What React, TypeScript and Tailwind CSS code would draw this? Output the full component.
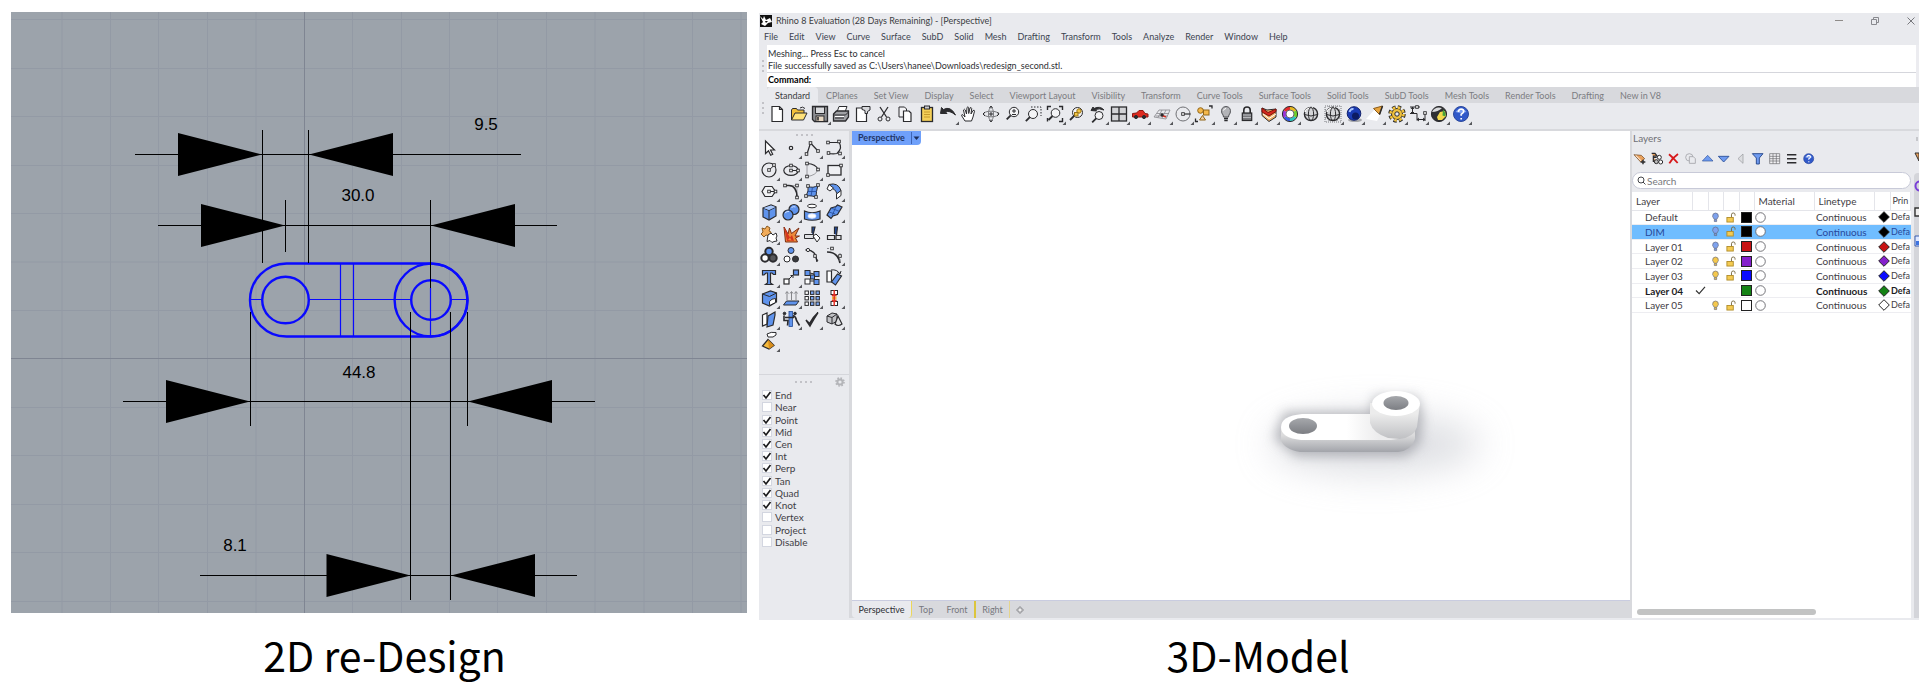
import React from "react";

type Tool = { name: string; art: React.ReactNode; more?: boolean };

const menus = ["File", "Edit", "View", "Curve", "Surface", "SubD", "Solid", "Mesh", "Drafting", "Transform", "Tools", "Analyze", "Render", "Window", "Help"];

const tabs = ["Standard", "CPlanes", "Set View", "Display", "Select", "Viewport Layout", "Visibility", "Transform", "Curve Tools", "Surface Tools", "Solid Tools", "SubD Tools", "Mesh Tools", "Render Tools", "Drafting", "New in V8"];

const snaps: [string, boolean][] = [
    ["End", true],
    ["Near", false],
    ["Point", true],
    ["Mid", true],
    ["Cen", true],
    ["Int", true],
    ["Perp", true],
    ["Tan", true],
    ["Quad", true],
    ["Knot", true],
    ["Vertex", false],
    ["Project", false],
    ["Disable", false],
];

const layers = [
    { name: "Default", color: "#000000", bulb: "#7ea2ee" },
    { name: "DIM", color: "#000000", bulb: "#7ea2ee", selected: true },
    { name: "Layer 01", color: "#c81414", bulb: "#7ea2ee" },
    { name: "Layer 02", color: "#8420cc", bulb: "#f5c84c" },
    { name: "Layer 03", color: "#0a0aff", bulb: "#f5c84c" },
    { name: "Layer 04", color: "#148214", bulb: "", current: true },
    { name: "Layer 05", color: "#ffffff", bulb: "#f5c84c" },
];

const ink = "#2b2b2e";
const blue = "#5f93ec";

// Small square handle used on most of the curve icons
const Knob = ({ x, y, fill = "#fff" }: { x: number; y: number; fill?: string }) => (
    <rect x={x - 1.3} y={y - 1.3} width="2.6" height="2.6" fill={fill} stroke={ink} strokeWidth="0.9" />
);

const Lens = ({ x, y, r }: { x: number; y: number; r: number }) => (
    <>
        <circle cx={x} cy={y} r={r} fill="#f4f4f6" />
        <path d={`M${x - r * 0.7} ${y + r * 0.7}L${x - r * 0.7 - 4} ${y + r * 0.7 + 4}`} strokeWidth="1.8" />
    </>
);

const Globe = () => (
    <>
        <circle cx="10" cy="10" r="6.6" fill="#d4d5d8" strokeWidth="1.4" />
        <path d="M4 8a7 6 0 0 1 8-4" stroke="#fff" strokeWidth="1.5" />
        <ellipse cx="10" cy="10" rx="2.6" ry="6.5" />
        <path d="M3.500 10.500q6.500 3 13 0" />
    </>
);

const Help = () => (
    <>
        <circle cx="10" cy="10" r="7.5" fill="#3159c9" stroke="#2a479c" />
        <path d="M4.500 8a6 5 0 0 1 11 0q-5 2-11 0" fill="#7d9ff0" stroke="none" />
        <path d="M7.400 8q.2-3 2.800-3 2.600.2 2.500 2.500-.2 1.400-2.500 2.700v1.600M10.200 14v1.400" stroke="#fff" strokeWidth="1.7" />
    </>
);

const toolbar: Tool[] = [
    { name: "New", art: <path d="M5 2.500h7.500l3 3v12H5zM12.500 2.500v3h3" fill="#fff" strokeWidth="1.200" /> },
    { name: "Open", art: <><path d="M2.500 16V6l1-1.500h4l1 1.500h6.500v3" fill="#f2bf3a" /><path d="M2.500 16l3.500-7h12l-3.500 7z" fill="#ffe27a" /><path d="M11 4q2.500-2 5 .5" /></> },
    { name: "Save", more: true, art: <><path d="M2.500 2.500h15v15h-13l-2-2z" fill="#8d8e92" strokeWidth="1.300" /><rect x="5.500" y="3" width="9" height="6.500" fill="#d9dadd" /><rect x="6" y="12" width="8" height="5.500" fill="#e9d9c4" /><path d="M8 13v3.500" strokeWidth="1.600" /></> },
    { name: "Print", art: <><path d="M6 8l2-5.500h8L14 8" fill="#fff" /><path d="M2.500 10l3-3h12v6l-3 4h-12z" fill="#a0a1a5" strokeWidth="1.300" /><path d="M3 11h11.500l3-3M4 14h9" /><path d="M4 12.500h9" stroke="#fff" /></> },
    { name: "Properties", art: <><path d="M3.500 4h10v13.500h-10z" fill="#fff" strokeWidth="1.200" /><path d="M9 2.500h8v3.500l-2.500 1.500v2H12V6.500L9 5.500z" fill="#d7d8db" /></> },
    { name: "Cut", art: <><path d="M6 3l6.500 10M14 3L7.500 13" strokeWidth="1.300" /><circle cx="6" cy="15" r="2" /><circle cx="14" cy="15" r="2" /></> },
    { name: "Copy", art: <><path d="M4 3h5.500l2 2v8H4z" fill="#f4f4f6" /><path d="M8.500 7H14l2 2v8.500H8.500z" fill="#fff" strokeWidth="1.200" /></> },
    { name: "Paste", art: <><rect x="4.500" y="3.500" width="11" height="14" fill="#f4cf58" strokeWidth="1.300" /><rect x="7.500" y="2" width="5" height="3" fill="#c9cacd" /><path d="M7 8h6M7 10.500h6M7 13h6" stroke="#c69a2c" /></> },
    { name: "Undo", more: true, art: <path d="M2.500 9.500l1-6 2 2q7-4 12 5.500-6-5-10-3l1.500 1.500z" fill={ink} /> },
    { name: "Pan", art: <path d="M6 17l-3.500-5.500q0-2 2 0L6 13 4.500 6q1-1.500 1.800 0l1.200 4L8 3.500q1-1.500 1.700 0v6l1.300-5.500q1.200-1.200 1.700.5l-.7 5.500 2-3.500q1.500-.8 1.500.7L14 13l-1.500 4z" fill="#fff" /> },
    { name: "Rotate", art: <><ellipse cx="10" cy="10" rx="7.500" ry="2.800" stroke="#77787c" /><ellipse cx="10" cy="10" rx="2.500" ry="6.500" stroke="#77787c" /><path d="M8.500 4L10 2l1.500 2M8.500 16l1.500 2 1.500-2M8 10h4M10 8v4M4 8L2 10l2 2M16.500 8l1.500 2-2 2" /></> },
    { name: "Zoom", art: <><Lens x={12} y={8} r={4.700} /><path d="M10 7h4M12 5v4M10 10.500h4" /></> },
    { name: "Zoom window", art: <><path d="M7 3h10v9" strokeDasharray="1.500 1.500" /><Lens x={9} y={10} r={4.500} /></> },
    { name: "Zoom extents", more: true, art: <><Lens x={10.500} y={9} r={4.300} /><path d="M2.500 6V2.500H6M14 2.500h3.500V6M17.500 14v3.500H14M2.500 14v3.500" strokeWidth="1.400" /></> },
    { name: "Zoom selected", art: <><Lens x={11.500} y={8.500} r={5} /><circle cx="13" cy="7" r="2.200" fill="#f4c744" stroke="#967218" /><rect x="8.500" y="8.500" width="3.500" height="3.500" fill="#f4c744" stroke="#967218" /></> },
    { name: "Undo view", more: true, art: <><Lens x={11} y={11.500} r={4} /><path d="M3 6.500L5 3l1 1.500q6-3 10 1.500-5-2-8.500-.5l1 1.500z" fill={ink} /></> },
    { name: "Viewports", more: true, art: <><rect x="2.500" y="3" width="15" height="14" fill="#d2d3d6" strokeWidth="1.300" /><path d="M10 3v14M2.500 10h15" strokeWidth="1.300" /></> },
    { name: "Set view", more: true, art: <><path d="M2.500 9.500l4-.5 2.500-2.500h4l2 3 3 .5v3h-15.500z" fill="#de2a1f" stroke="#8e1710" /><circle cx="6" cy="13" r="1.600" fill={ink} /><circle cx="14" cy="13" r="1.600" fill={ink} /></> },
    { name: "CPlane", more: true, art: <><path d="M2 13l5-7h11l-4 9zM5 9.500h12M3.500 12h12M10 6l-4 7.500M14 6l-4 8" stroke="#86878b" strokeWidth=".8" /><path d="M9 11l5 2" stroke="#d52b1e" strokeWidth="1.500" /><circle cx="10" cy="11" r="1.200" fill={ink} /></> },
    { name: "Object snap", more: true, art: <><circle cx="10" cy="10" r="7" stroke="#707175" /><path d="M10 10h7.500" strokeWidth="1.200" /><Knob x={10} y={10} /></> },
    { name: "Select", more: true, art: <><circle cx="6.500" cy="6.500" r="2.800" fill="#f4b84b" stroke="#926618" /><rect x="9.500" y="6" width="5.500" height="5" fill="#f4b84b" stroke="#926618" /><path d="M8.500 11.500l3 4.500h-6z" fill="#f4d0a0" stroke="#926618" /><path d="M15 2h3v2.500M1.500 14.500v3h2.500" strokeWidth="1.300" /></> },
    { name: "Hide", more: true, art: <><path d="M7.500 13q0-2-1.700-4Q4.500 3 10 2.500q5.500.5 4.200 6.500-1.700 2-1.700 4z" fill="#b3b4b8" stroke="#505155" /><path d="M8 14.500h4M8.300 16.500h3.400" strokeWidth="1.500" /><path d="M7.500 6.500q.5-2 2.500-2" stroke="#fff" /></> },
    { name: "Lock", more: true, art: <><path d="M6.800 9V6q0-3 3.200-3t3.200 3v3" strokeWidth="1.600" /><rect x="5.300" y="9" width="9.400" height="7.500" fill="#77787c" strokeWidth="1.200" /><path d="M6 11h8M6 13.500h8" stroke="#b8b9bd" /></> },
    { name: "Layers", more: true, art: <><path d="M3 4l5 2 9-1v8l-7 4.500-7-6z" fill="#f0b46a" /><path d="M3 4l6 4.500L17 5v2.500L10 12 3 8z" fill="#d5281c" stroke="#7a120b" /><path d="M4 10l6 4.500 7-4.500" stroke="#fff" /></> },
    { name: "Color", more: true, art: <><g strokeWidth="3.200"><path d="M10 4.200A5.800 5.800 0 0 1 15 7" stroke="#e6b820" /><path d="M15 7A5.800 5.800 0 0 1 15 13" stroke="#6ed22b" /><path d="M15 13A5.800 5.800 0 0 1 10 15.800" stroke="#2cc7c0" /><path d="M10 15.800A5.800 5.800 0 0 1 5 13" stroke="#2f5be8" /><path d="M5 13A5.800 5.800 0 0 1 5 7" stroke="#9a35dc" /><path d="M5 7A5.800 5.800 0 0 1 10 4.200" stroke="#e62b2b" /></g><circle cx="10" cy="10" r="7.600" /><circle cx="10" cy="10" r="4" fill="#fff" strokeWidth=".7" /></> },
    { name: "Render", art: <Globe /> },
    { name: "Render preview", more: true, art: <><path d="M2 2h16v16H2zM6 2v16M14 2v16M2 6h16M2 14h16M10 2v16" stroke="#77787c" strokeDasharray="1 1" /><Globe /></> },
    { name: "Shaded", more: true, art: <><ellipse cx="11" cy="16" rx="7" ry="2" fill="#a5a6aa" stroke="none" /><circle cx="10" cy="9.500" r="6.800" fill="#1a3bb4" stroke="#10206a" /><circle cx="11.500" cy="12" r="3.500" fill="#0c1b62" stroke="none" /><path d="M5.500 8q1-3.500 4-3" stroke="#a9c4ff" strokeWidth="2" /></> },
    { name: "Spotlight", more: true, art: <><path d="M1 15L10 5l5 6-3 6z" fill="#fff" stroke="none" /><path d="M8.500 4.500l9-2.500-3 8.500z" fill="#e8a43c" stroke="#8a5a18" /><path d="M17.500 2l-3 8.500" strokeWidth="1.500" /></> },
    { name: "Options", more: true, art: <><circle cx="10" cy="10" r="6.500" stroke={ink} strokeWidth="4.500" strokeDasharray="3 2.100" /><circle cx="10" cy="10" r="5.500" fill="#f0c13c" /><circle cx="10" cy="10" r="6.500" stroke="#f0c13c" strokeWidth="2.500" strokeDasharray="2.500 2.600" /><circle cx="10" cy="10" r="2.200" fill="#e9eaee" /></> },
    { name: "Dimension", more: true, art: <><path d="M2 3h10M2 9.500h7M4.500 3v6.500M3 5l1.500-2L6 5M3 8l1.500 1.500L6 8M9 9.500v7M17 9v8M9 15.500h8M11 14l-2 1.500 2 1.500M15 14l2 1.500-2 1.500" /><Knob x={9} y={3} /><Knob x={17} y={9} /></> },
    { name: "Grasshopper", more: true, art: <><circle cx="10" cy="10" r="7.600" fill="#2f3033" /><path d="M3 8q3-6 10-4-4 4-10 4z" fill="#dadbdd" stroke="none" /><path d="M8 13l3-5 5-1 1 5-4 4H9z" fill="#f3d94c" stroke="none" /><path d="M14 5.500q3 3 2.500 7l-3-1z" fill="#45a33b" stroke="none" /></> },
    { name: "Help", more: true, art: <Help /> },
];

const palette: Tool[] = [
    { name: "Pointer", art: <path d="M6.500 3v12.500l3-2.800 2.200 4.500 2-1-2.200-4.200h4z" fill="#fff" strokeWidth="1.200" /> },
    { name: "Point", more: true, art: <circle cx="10" cy="10" r="1.700" fill="#fff" strokeWidth="1.200" /> },
    { name: "Polyline", more: true, art: <><path d="M5 16L8.500 5 16 13" strokeWidth="1.200" /><Knob x={4.500} y={16} /><Knob x={8.500} y={5} /><Knob x={16} y={13} /></> },
    { name: "Curve", more: true, art: <><path d="M4 4.500h11Q19 10 13 15.500q-5 1-9-.5" strokeWidth="1.200" /><Knob x={4} y={4.500} /><Knob x={15} y={3.500} /><Knob x={4.500} y={15} /><Knob x={16} y={15.500} /></> },
    { name: "Circle", more: true, art: <><circle cx="10" cy="10" r="7" strokeWidth="1.200" /><path d="M10 10l5-4.500" /><Knob x={10} y={10} /><Knob x={15} y={5} /></> },
    { name: "Ellipse", more: true, art: <><ellipse cx="10" cy="10.500" rx="7.200" ry="4.800" strokeWidth="1.200" /><path d="M10 10.500h7" /><Knob x={10} y={10.500} /><Knob x={10} y={5.500} /><Knob x={17} y={10.500} /></> },
    { name: "Arc", more: true, art: <><path d="M5 3.500v13M5 16.500q9-1 11-7" stroke="#88898d" strokeWidth=".8" /><path d="M5 3.500q9 .5 11 6" strokeWidth="1.200" /><Knob x={5} y={3.500} /><Knob x={5} y={16.500} /><Knob x={16} y={9.500} /></> },
    { name: "Rectangle", more: true, art: <><rect x="4" y="5.500" width="13" height="9.500" strokeWidth="1.300" fill="#eff0f3" /><Knob x={4} y={15} /><Knob x={17} y={5.500} /></> },
    { name: "Polygon", more: true, art: <><path d="M3 10.500L6 5.500h7l3.500 5-3.500 5H6z" fill="#f2f3f5" strokeWidth="1.200" /><path d="M10 10.500h6" /><Knob x={10} y={10.500} /><Knob x={16.500} y={10.500} /></> },
    { name: "Fillet", more: true, art: <><path d="M4 4.500h12v12" stroke="#aaabaf" /><path d="M4 4.500h4q8 .5 8 12" strokeWidth="1.500" /><Knob x={4} y={4.500} /><Knob x={16} y={4.500} /><Knob x={16} y={16.500} /></> },
    { name: "Surface from points", more: true, art: <><path d="M6 5q5 3 10-1-2 7-2 12-5-2-10-1 3-5 2-10z" fill={blue} /><path d="M10.500 6L9 15.500M5.500 10.500h9.500" stroke="#234b9c" strokeWidth=".8" /><Knob x={6} y={5} /><Knob x={16} y={4} /><Knob x={14} y={16} /><Knob x={4} y={15} /></> },
    { name: "Sweep", more: true, art: <><path d="M5 3.500q9-2.500 12 6l-4 3.500Q11 6.500 5 7z" fill={blue} /><path d="M5 3.500L3 8l3 2 3.500-3zM17 9.500v5L12.500 18v-5z" fill="#fff" /></> },
    { name: "Box", more: true, art: <><path d="M4 6l8-3 5 2v9l-7 4-6-3z" fill={blue} strokeWidth="1.200" /><path d="M4 6l6 2.500v9M10 8.500L17 5" /><path d="M4.500 6L12 3.500l4.500 1.500-6.500 3z" fill="#a9c7fa" stroke="none" /></> },
    { name: "Boolean union", more: true, art: <><circle cx="13" cy="7.500" r="5" fill={blue} strokeWidth="1.200" /><circle cx="7" cy="13" r="5" fill={blue} strokeWidth="1.200" /><path d="M4 11q2-2 4-1.500M10.500 5.500q2-1.500 4-.5" stroke="#cfe0ff" /></> },
    { name: "Extract surface", more: true, art: <><ellipse cx="10" cy="4" rx="4.500" ry="1.800" fill="#fff" /><path d="M2.500 9q7.500 3.500 15.500 0v8q-8 2.500-15.500 0z" fill={blue} strokeWidth="1.200" /><ellipse cx="10" cy="14" rx="4" ry="2.200" fill="#fff" stroke="#dfe9ff" /></> },
    { name: "Loft", more: true, art: <><path d="M3 13l4-7 5-1.500 1.500-1.500L18 5l-4.500 7.500L9 14l-2 2.500z" fill={blue} strokeWidth="1.200" /><path d="M7 6l5 2 3.500 1.500M12 4.500L8 14M5 10l6 2" stroke="#244a94" strokeWidth=".8" /></> },
    { name: "Explode", more: true, art: <><path d="M3 4l3 1 2-3 3 2-1 3 2 1-1 4-4-1-2 2-3-3 2-2z" fill="#f1ab59" stroke="#8a5a20" /><path d="M9 11l3-2 2 2 3-2 1 3-1 2 1 3-3 .5-2 1-2-2-3 1z" fill="#fff" /></> },
    { name: "Split burst", art: <><path d="M3 3l4 7 1.500-6 2 5.500L18 4l-4 8h4.500l-4 2 2 4H4.500z" fill="#ee8a3a" stroke="#7c2c12" /><path d="M3 3l3 14h5zM7 16l4-5 2 6z" fill="#d5361d" stroke="none" /></> },
    { name: "Trim", art: <><path d="M10 9V3h3l-2 8" fill="#234b9c" strokeWidth="1.200" /><path d="M2.500 10.500h9v4h-9z" fill="#dfe0e3" /><path d="M11 12l3-2 4 4-3 4z" fill="#fff" /></> },
    { name: "Split", art: <><path d="M10.500 10V3h3l-1 8" fill="#234b9c" strokeWidth="1.200" /><path d="M3.500 11.500h7v4h-7zM12 11.500h5v4h-5z" fill="#e6e7ea" strokeWidth="1.200" /></> },
    { name: "Group", more: true, art: <><circle cx="10" cy="6.500" r="3.700" fill={blue} strokeWidth="2" /><circle cx="6" cy="13" r="3.700" fill="#fff" strokeWidth="2" /><circle cx="14" cy="13" r="3.700" fill="#55565a" strokeWidth="2" /></> },
    { name: "Ungroup", art: <><circle cx="10" cy="5.500" r="3" fill={blue} /><circle cx="6" cy="14" r="3" fill="#fff" /><circle cx="14.500" cy="14" r="3" fill="#38393c" /></> },
    { name: "Edit points", art: <><path d="M3.500 5Q14 4 15 17" strokeWidth="1.400" /><circle cx="6" cy="5" r="1.600" fill="#fff" /><Knob x={13} y={11} /><path d="M14 13l2 3" /></> },
    { name: "Control points", more: true, art: <><path d="M3 7q11 0 13 11" strokeWidth="1.700" /><path d="M3 3.500h6M16 8v9" stroke="#88898d" strokeDasharray="2 1" /><Knob x={8} y={3.500} /><Knob x={16} y={11} /></> },
    { name: "Text", more: true, art: <path d="M3.500 3.500h13v4h-2L13 6h-1.500v10l2 1.500h-7l2-1.500V6H7L5 8H3.500z" fill={blue} strokeWidth="1.200" /> },
    { name: "Move", more: true, art: <><rect x="3" y="12" width="5" height="5" fill="#fff" strokeWidth="1.200" /><rect x="12.500" y="3" width="5" height="5" fill={blue} strokeWidth="1.200" /><path d="M8 12l4-4M9.500 8.500H12v2.500" /></> },
    { name: "Copy objects", art: <><path d="M8 6l4 1M8 14h4" /><rect x="3" y="3.500" width="5" height="5" fill={blue} /><rect x="12" y="4.500" width="5" height="5" fill={blue} /><rect x="8.500" y="8" width="4" height="4" fill={blue} /><rect x="3" y="12" width="5" height="5" fill="#fff" /><rect x="12" y="12.500" width="5" height="5" fill={blue} /></> },
    { name: "Rotate objects", art: <><path d="M3 4h4.500v11H3z" fill="#fff" strokeWidth="1.200" /><path d="M13.500 7l4 2-6 9-4-3z" fill={blue} strokeWidth="1.200" /><path d="M7 3q6-1 9 4M13.500 5l2.500 2 1-3" /></> },
    { name: "Boolean difference", more: true, art: <><path d="M3.500 6l8-3 6 2v9l-7 4-7-3z" fill={blue} strokeWidth="1.200" /><path d="M3.500 6l7 2.500L17.500 5" /><path d="M10.500 17.500v-4q2-3 6-3v4z" fill="#fff" /></> },
    { name: "Project to plane", more: true, art: <><path d="M2.500 17l3-4H18l-3 4z" fill={blue} /><path d="M6 12V4M10.500 12V4M15 12V4M4.500 5.500L6 3.500l1.500 2M9 5.500l1.500-2 1.500 2M13.500 5.500l1.500-2 1.500 2" stroke="#85868a" /></> },
    { name: "Array", more: true, art: <g>{[3, 8.500, 14].map((y) => [3, 8.500, 14].map((x) => <rect key={`${x}-${y}`} x={x} y={y} width="3.400" height="3.400" fill={x === 3 ? "#fff" : "#7ba6f1"} />))}</g> },
    { name: "Align", more: true, art: <><rect x="7" y="2.500" width="6.500" height="4" fill="#fff" /><rect x="8" y="8.500" width="4.500" height="3" fill="#f6b13c" stroke="none" /><rect x="7" y="13.500" width="6.500" height="4" fill="#fff" /><path d="M10.200 2v16M8 8l2.200-2 2.200 2M8 12l2.200 2 2.200-2" stroke="#de2a1f" strokeWidth="1.400" /></> },
    { name: "Mirror", more: true, art: <><path d="M3.500 6l4.500-2v11l-4.500 2z" fill="#fff" strokeWidth="1.200" /><path d="M9 7l7-4v3l-2 10-6 2z" fill={blue} strokeWidth="1.200" /></> },
    { name: "History", more: true, art: <><rect x="8" y="2.500" width="3.500" height="15" fill={blue} stroke="#244a94" strokeWidth=".8" /><path d="M3 6.500v5h4l-.5 5M4 8.500h9M12 6.500q3 1 3.500 5l3 5" strokeWidth="1.600" /><circle cx="3.500" cy="4.500" r="1.300" fill={ink} /><circle cx="14" cy="4.500" r="1.300" fill={ink} /></> },
    { name: "Check", more: true, art: <path d="M4 11l3.500 3.500q3-6 8.500-11-4 6-8 13.500z" fill={ink} strokeWidth="1.500" /> },
    { name: "Mesh", more: true, art: <><path d="M3 7l5-3 5 1v7l-5 3-5-2z" fill="#bfc0c4" /><path d="M3 7l5 1.500L13 5M8 8.500V15" /><path d="M14 7l4 8q-4 3-7 0z" fill="#e2e3e6" strokeWidth="1.200" /></> },
    { name: "Drag pyramid", more: true, art: <><path d="M8 3q4-2.500 9-1.500v2.500l-3 2H9z" fill="#fff" /><path d="M3.500 15L9 8.500l6 6-5 3.500z" fill="#f4b93d" strokeWidth="1.200" /><path d="M9 8.500l1 9.500 5-3.500z" fill="#d98e1c" stroke="none" /></> },
];

const layerTools: Tool[] = [
    { name: "New layer", art: <><path d="M1.500 4l11 1 5 5-6 5z" fill="#e8a05c" stroke="#6b431d" /><path d="M4 5l8 8" stroke="#fff" strokeWidth="1.500" /><path d="M15 11.500v7M11.500 15h7" strokeWidth="2.200" /></> },
    { name: "New sublayer", art: <><path d="M2.500 2h5l3 4H5v8h4M5 8h5" fill="#e8a05c" strokeWidth="1.800" /><circle cx="14" cy="8" r="3" fill="#fff" strokeWidth="1.500" /><circle cx="9.500" cy="14.500" r="3" fill="#bbb" strokeWidth="1.500" /><circle cx="16" cy="15" r="3" fill="#fff" strokeWidth="1.500" /></> },
    { name: "Delete", art: <path d="M3 3.500q6 5 13 13M16.500 3Q8 9 3.500 17" stroke="#d6181a" strokeWidth="2.800" /> },
    { name: "Duplicate", art: <g stroke="#a5a6aa" strokeWidth="1.300"><circle cx="8" cy="8" r="5.500" /><path d="M8 7h6l3 3v7H8z" fill="#e9eaee" /></g> },
    { name: "Move up", art: <path d="M2 13.500L10 5l8 8.500z" fill="#6f9bf0" stroke="#32559c" /> },
    { name: "Move down", art: <path d="M2 6.500l8 8.500 8-8.500z" fill="#6f9bf0" stroke="#32559c" strokeWidth="1.400" /> },
    { name: "Move out", art: <path d="M13.500 3v14L6 10z" fill="#dcdde0" stroke="#96979b" /> },
    { name: "Filter", art: <path d="M2 2.500h16l-5.500 6.500v9H8V9z" fill="#6f9bf0" stroke="#26478c" strokeWidth="1.400" /> },
    { name: "Columns", art: <path d="M2.500 2.500h15v15h-15zM2.500 6.500h15M2.500 10h15M2.500 13.500h15M7.500 2.500v15M12.500 2.500v15" stroke="#66676b" fill="#f2f2f4" /> },
    { name: "Menu", art: <path d="M3 4h14M3 10h14M3 16h14" strokeWidth="2.200" /> },
    { name: "Layer help", art: <Help /> },
];

const ToolButton = ({ tool, size }: { tool: Tool; size: string }) => (
    <button aria-label={tool.name} className="flex items-center justify-center">
        <svg viewBox="0 0 21 21" className={size} fill="none" stroke={ink} strokeWidth="1">
            {tool.art}
            {tool.more && <path d="M21 17.500V21h-3.500z" fill="#55565a" stroke="none" />}
        </svg>
    </button>
);

const Grip = ({ vertical = false }: { vertical?: boolean }) => (
    <span className={vertical ? "flex flex-col gap-[3px]" : "flex gap-[3px]"}>
        {[0, 1, 2, 3].slice(vertical ? 1 : 0).map((n) => (
            <span key={n} className="size-[2px] rounded-full bg-[#b4b5ba]" />
        ))}
    </span>
);

// One dimension line: arrow heads point inwards at `from` and `to`
const Dimension = ({ y, start, end, from, to }: { y: number; start: number; end: number; from: number; to: number }) => (
    <g>
        <path d={`M${start} ${y}H${end}`} stroke="#000" strokeWidth="1" />
        <path d={`M${from} ${y}l-84 -21.500v43zM${to} ${y}l84 -21.500v43z`} />
    </g>
);

const Drawing = () => (
    <svg viewBox="11 12 736 601" className="block w-full bg-[#9ca3ab]" fontFamily="'Liberation Sans', Arial, sans-serif">
        <g stroke="#939aa5" strokeWidth="1">
            {[62, 110.500, 158.500, 207.500, 256, 352.500, 401.500, 449.500, 497.500, 546.500, 595, 644, 692.500, 741].map((x) => (
                <path key={x} d={`M${x} 12V613`} />
            ))}
            {[19.500, 68.500, 116.500, 165.500, 213.500, 262, 310.500, 407.500, 455.500, 504.500, 552.500, 601.500].map((y) => (
                <path key={y} d={`M11 ${y}H747`} />
            ))}
            <path d="M304.500 12V613M11 358.500H747" stroke="#7f8592" />
        </g>

        <Dimension y={154.500} start={135} end={521} from={262} to={309} />
        <Dimension y={225.500} start={158} end={557} from={285} to={431} />
        <Dimension y={401.500} start={123} end={595} from={250} to={468} />
        <Dimension y={575.500} start={200} end={577} from={410.500} to={451} />

        <g fill="none" stroke="#0a0aff" strokeWidth="2.400">
            <path d="M286.500 263.500H431a36.400 36.400 0 0 1 0 73H286.500a36.400 36.400 0 0 1 0-73z" />
            <circle cx="431" cy="300" r="36.400" />
            <circle cx="285.500" cy="300" r="23.300" />
            <circle cx="431" cy="300" r="19.800" />
            <path d="M250 299.500h12M309 299.500h102M451 299.500h17M340.500 264v72M353.500 264v72M430.500 288v48" strokeWidth="1.200" />
        </g>

        <path
            d="M262.500 130V263M308.500 130V263M285.500 200V252M430.500 200V288M250.500 312V426M467.500 312V426M410.500 312V600M450.500 312V600"
            stroke="#000"
            strokeWidth="1"
        />

        <g fontSize="17" textAnchor="middle">
            <text x="486" y="130">9.5</text>
            <text x="358" y="201">30.0</text>
            <text x="359" y="378">44.8</text>
            <text x="235" y="551">8.1</text>
        </g>
    </svg>
);

const Model = () => (
    <svg viewBox="0 0 300 160" className="h-[160px] w-[300px] shrink-0 overflow-visible">
        <defs>
            <linearGradient id="side" x1="0" y1="0" x2="0" y2="1">
                <stop offset="0.400" stopColor="#dcdcdd" />
                <stop offset="1" stopColor="#a2a4aa" />
            </linearGradient>
            <linearGradient id="boss" x1="0" y1="0" x2="0" y2="1">
                <stop offset="0.300" stopColor="#ececec" />
                <stop offset="1" stopColor="#bfc0c3" />
            </linearGradient>
            <linearGradient id="top" x1="0" y1="0" x2="1" y2="0">
                <stop offset="0.500" stopColor="#fff" />
                <stop offset="0.750" stopColor="#ececed" />
            </linearGradient>
            <linearGradient id="hole" x1="0" y1="0" x2="0" y2="1">
                <stop offset="0" stopColor="#a6a8ac" />
                <stop offset="1" stopColor="#7c7e83" />
            </linearGradient>
            <filter id="wide" x="-50%" y="-100%" width="200%" height="300%">
                <feGaussianBlur stdDeviation="18" />
            </filter>
            <filter id="near" x="-50%" y="-50%" width="200%" height="200%">
                <feGaussianBlur stdDeviation="6" />
            </filter>
        </defs>
        <ellipse cx="145" cy="84" rx="105" ry="30" fill="#c9cbd2" opacity="0.6" filter="url(#wide)" />
        <path d="M54 52h85l6-16h42l6 20-3 28-14 12H66L44 78z" fill="#8e9097" opacity="0.6" filter="url(#near)" />
        <path d="M51 67v13q3 9 19 12h98q13-1 17-13V64z" fill="url(#side)" />
        <path d="M72 54h95q15 2 15 13t-21 13H71Q51 78 51 67t21-13z" fill="url(#top)" />
        <path d="M140 43v20q3 10 18 15l12 1q14-2 17-12l3-24z" fill="url(#boss)" />
        <ellipse cx="166" cy="43.500" rx="24" ry="12.500" fill="#fff" />
        <ellipse cx="166" cy="43" rx="12.500" ry="7" fill="url(#hole)" />
        <ellipse cx="73" cy="66" rx="14" ry="8" fill="url(#hole)" />
    </svg>
);

const TitleBar = () => (
    <div className="flex h-4 items-center text-[#3c3d42]">
        <svg viewBox="0 0 12 12" className="ml-px size-3">
            <rect width="12" height="12" fill="#111" />
            <path d="M0 1l3 3 1-3 2 4 4-2 2 4-4 1-3 3-4-2 2-2z" fill="#fff" />
            <path d="M5 6l3 0-2 2z" fill="#111" />
        </svg>
        <span className="ml-1 text-[9px]">Rhino 8 Evaluation (28 Days Remaining) - [Perspective]</span>
        <div className="ml-auto mr-1 flex items-center gap-7">
            <button aria-label="Minimize">
                <svg viewBox="0 0 8 8" className="size-2" stroke="#8e8b88" fill="none"><path d="M0 3.500h8" /></svg>
            </button>
            <button aria-label="Restore">
                <svg viewBox="0 0 8 8" className="size-2" stroke="#88898e" fill="none"><path d="M.5 2.500h5v5h-5zM2.500 2.500v-2h5v5h-2" /></svg>
            </button>
            <button aria-label="Close">
                <svg viewBox="0 0 8 8" className="size-2" stroke="#77787d" fill="none"><path d="M.5.5l7 7M7.500.5l-7 7" /></svg>
            </button>
        </div>
    </div>
);

const CommandArea = () => (
    <div className="flex h-[42px]">
        <div className="flex w-2 items-center justify-center"><Grip vertical /></div>
        <div className="flex-1 bg-white text-[9px] text-[#2e2f33]">
            <div className="flex h-7 flex-col justify-end border-b border-[#d5d6dc] pl-px leading-[12px]">
                <p>Meshing... Press Esc to cancel</p>
                <p>File successfully saved as C:\Users\hanee\Downloads\redesign_second.stl.</p>
            </div>
            <label className="flex h-[14px] items-center pl-px font-bold text-black">
                Command:
                <input className="ml-1 h-3 flex-1 outline-none" />
            </label>
        </div>
        <div className="w-[3px] bg-[#ececf0]" />
    </div>
);

const Toolbar = () => (
    <div className="flex h-[42px]">
        <div className="flex w-2 items-center justify-center"><Grip vertical /></div>
        <div className="flex-1">
            <div className="flex h-4 items-stretch bg-[#d8d9dd] text-[9px] text-[#7b7c81]">
                {tabs.map((tab, i) => (
                    <button
                        key={tab}
                        className={i === 0 ? "rounded-t bg-[#e9eaee] px-2 pt-[2px] text-[#3c3d42]" : "px-2 pt-[2px]"}
                    >
                        {tab}
                    </button>
                ))}
            </div>
            <div className="grid w-[705px] grid-cols-33 pt-px">
                {toolbar.map((tool) => (
                    <ToolButton key={tool.name} tool={tool} size="size-[21px]" />
                ))}
            </div>
        </div>
    </div>
);

const SidePanel = () => (
    <aside className="flex w-[93px] shrink-0 flex-col border-r-[3px] border-[#d8d9dd]">
        <div className="flex h-[7px] items-center justify-center"><Grip /></div>
        <div className="grid h-[214px] w-[86px] grid-cols-4">
            {palette.map((tool) => (
                <ToolButton key={tool.name} tool={tool} size="size-[21px]" />
            ))}
        </div>
        <div className="mt-[22px] flex h-[15px] items-center border-t border-[#d5d6db] pl-9">
            <Grip />
            <button aria-label="Snap options" className="ml-auto mr-1">
                <svg viewBox="0 0 10 10" className="size-[10px]" fill="none" stroke="#b4b5b9">
                    <circle cx="5" cy="5" r="4" strokeWidth="1.600" strokeDasharray="1.600 1.540" />
                    <circle cx="5" cy="5" r="2.600" strokeWidth="2" />
                </svg>
            </button>
        </div>
        <div className="grid h-[159px] pl-[3px] text-[10px] text-[#3f4045]">
            {snaps.map(([name, on]) => (
                <label key={name} className="flex items-center gap-[3px]">
                    <span className="grid size-[10px] place-items-center">
                        <input type="checkbox" defaultChecked={on} className="peer col-start-1 row-start-1 size-[10px] appearance-none border border-[#d3d6e0] bg-white" />
                        <svg viewBox="0 0 10 10" className="pointer-events-none invisible col-start-1 row-start-1 size-[10px] peer-checked:visible" fill="none" stroke="#1b1b1d" strokeWidth="1.700">
                            <path d="M1.500 5l2.500 3L8.500 2" />
                        </svg>
                    </span>
                    <span className="leading-3">{name}</span>
                </label>
            ))}
        </div>
    </aside>
);

const Viewport = () => (
    <section className="flex min-w-0 flex-1 flex-col">
        <div className="flex-1 bg-white">
            <button className="flex h-[14px] w-[69px] items-center rounded-br bg-[#6fa0fa] pl-[6px] text-[9px] font-bold text-[#1f3566]">
                Perspective
                <svg viewBox="0 0 10 12" className="ml-auto h-3 w-[10px]"><path d="M.5 0v12" stroke="#3e64b4" /><path d="M2.500 4.500h6l-3 3.500z" fill="#1c2f5c" /></svg>
            </button>
            <div className="flex pl-[378px] pt-[215px]"><Model /></div>
        </div>
        <div className="flex h-[18px] items-stretch border-t border-[#c9cce0] bg-[#d8d9dd] text-[9px] text-[#77787d]">
            <button className="w-[60px] rounded-b border-r border-[#ecd75a] bg-[#e9eaee] text-[#2f3034]">Perspective</button>
            <button className="w-[28px]">Top</button>
            <button className="w-[36px] border-r-2 border-[#dcc53c]">Front</button>
            <button className="w-[34px] border-r border-[#e6d58c]">Right</button>
            <button aria-label="New viewport" className="ml-[6px]">
                <svg viewBox="0 0 8 8" className="size-2" fill="#eee" stroke="#808186" strokeWidth=".8"><path d="M3 1h2v2h2v2H5v2H3V5H1V3h2z" /></svg>
            </button>
        </div>
    </section>
);

const LayersPanel = () => (
    <section className="flex w-[281px] shrink-0 flex-col border-l-2 border-[#d8d9dd]">
        <h2 className="h-[14px] pl-px text-[10px] leading-[14px] text-[#6f7075]">Layers</h2>
        <div className="grid h-[27px] w-[185px] grid-cols-11">
            {layerTools.map((tool) => (
                <ToolButton key={tool.name} tool={tool} size="size-[14px]" />
            ))}
        </div>
        <label className="flex h-[17px] items-center rounded-full border border-[#c8cad8] bg-white pl-1">
            <svg viewBox="0 0 9 9" className="size-[9px]" fill="none" stroke="#45464a"><circle cx="4" cy="4" r="3" /><path d="M6 6l2.500 2.500" /></svg>
            <input type="search" placeholder="Search" className="ml-px min-w-0 flex-1 text-[10px] leading-[14px] outline-none placeholder:text-[#77787c]" />
        </label>
        <div className="mt-[3px] flex flex-1 flex-col overflow-hidden bg-white">
            <table className="h-[121px] w-full table-fixed text-left text-[10px] leading-[12px] text-[#3f4045]">
                <colgroup>
                    <col className="w-[60px]" />
                    <col className="w-4" />
                    <col className="w-[15px]" />
                    <col className="w-4" />
                    <col className="w-[15px]" />
                    <col className="w-[60px]" />
                    <col className="w-[60px]" />
                    <col className="w-4" />
                    <col />
                </colgroup>
                <thead>
                    <tr className="h-[18px] border-b border-[#e4e5ea] [&>th]:border-r [&>th]:border-[#e4e5ea] [&>th]:font-normal">
                        <th className="pl-1">Layer</th>
                        <th />
                        <th />
                        <th />
                        <th />
                        <th className="pl-1">Material</th>
                        <th className="pl-1">Linetype</th>
                        <th />
                        <th className="whitespace-nowrap pl-[2px] text-[9px]">Prin</th>
                    </tr>
                </thead>
                <tbody>
                    {layers.map((layer) => (
                        <tr
                            key={layer.name}
                            className={`border-b border-[#ededf1] ${layer.selected ? "bg-[#70bdff] text-[#28489a]" : ""} ${layer.current ? "font-bold text-[#1c1c1f]" : ""}`}
                        >
                            <td className="whitespace-nowrap pl-[13px]">{layer.name}</td>
                            <td>
                                {layer.current && (
                                    <svg viewBox="0 0 12 10" className="ml-[3px] h-[9px] w-[11px]" fill="none" stroke="#333" strokeWidth="1.300"><path d="M1 5l3.500 3.500L11 1" /></svg>
                                )}
                            </td>
                            <td>
                                {layer.bulb && (
                                    <svg viewBox="0 0 10 12" className="mx-auto h-[11px] w-[9px]" fill={layer.bulb} stroke="#626478" strokeWidth=".7"><path d="M3.500 8L1.800 5Q1.500 1 5 1t3.200 4L6.500 8z" /><path d="M3.700 8.500h2.600v2H3.700z" /></svg>
                                )}
                            </td>
                            <td>
                                {layer.bulb && (
                                    <svg viewBox="0 0 11 12" className="mx-auto h-[11px] w-[10px]" fill="none" stroke="#74653c"><path d="M6 6V3q0-2 2-2t2 2v1" /><rect x="1" y="6" width="7" height="5" fill="#f5cb52" stroke="#b08c2a" /></svg>
                                )}
                            </td>
                            <td>
                                <svg viewBox="0 0 11 11" className="mx-auto size-[11px]"><rect x=".5" y=".5" width="10" height="10" fill={layer.color} stroke="#222" /></svg>
                            </td>
                            <td>
                                <svg viewBox="0 0 11 11" className="ml-px size-[11px]"><circle cx="5.500" cy="5.500" r="4.800" fill="#fff" stroke="#66676c" strokeWidth=".9" /></svg>
                            </td>
                            <td className="pl-[2px]">Continuous</td>
                            <td>
                                <svg viewBox="0 0 12 12" className="ml-1 size-3"><path d="M6 .7L11.300 6 6 11.300.7 6z" fill={layer.color} stroke="#222" /></svg>
                            </td>
                            <td className="whitespace-nowrap pl-px text-[9px]">Defa</td>
                        </tr>
                    ))}
                </tbody>
            </table>
            <div className="mb-[3px] ml-[5px] mt-auto h-[6px] w-[179px] rounded-full bg-[#c2c3c3]" />
        </div>
    </section>
);

// Collapsed dock on the far right; only the left edge of its tabs shows
const DockEdge = () => (
    <div className="flex w-2 shrink-0 flex-col items-end overflow-hidden">
        <svg viewBox="0 0 5 42" className="h-[42px] w-[5px]"><path d="M2 6h2v4H2z" fill="#c6c7cb" /><path d="M1 22h4v8z" fill="#e8a05c" stroke="#333" /></svg>
        <div className="w-[5px] flex-1 rounded-tl bg-[#d4d5da]">
            <svg viewBox="0 0 5 80" className="h-20 w-[5px]" fill="none">
                <circle cx="6" cy="13" r="4.500" stroke="#7a3fd8" strokeWidth="2" />
                <path d="M6 35H1v8h5" stroke="#333" strokeWidth="1.400" fill="#eee" />
                <path d="M6 63H1v10h5" stroke="#3a5cad" fill="#dfe8ff" />
                <path d="M2 68h3v4H2z" fill="#3f74e0" />
            </svg>
        </div>
    </div>
);

const RhinoWindow = () => (
    <div className="mt-px flex h-[607px] flex-col border-b-2 border-[#e9eaee] bg-[#e9eaee]">
        <TitleBar />
        <nav className="flex h-4 items-center gap-[11px] pb-px pl-[5px] text-[9px] text-[#3c4450]">
            {menus.map((menu) => (
                <button key={menu}>{menu}</button>
            ))}
        </nav>
        <CommandArea />
        <Toolbar />
        <div className="flex min-h-0 flex-1 border-t-2 border-[#d8d9dd]">
            <SidePanel />
            <Viewport />
            <LayersPanel />
            <DockEdge />
        </div>
    </div>
);

const App = () => {
    return (
        <main className="grid grid-cols-[736fr_1160fr] gap-x-3 bg-white pl-[11px] pr-px pt-3 font-[Lato,'Open_Sans',sans-serif] text-black">
            <Drawing />
            <RhinoWindow />
            <h1 className="pb-1 pl-[11px] text-center font-['Noto_Sans_CJK_SC',sans-serif] text-[41px] leading-[68px]">2D re-Design</h1>
            <h1 className="pb-1 pr-[162px] text-center font-['Noto_Sans_CJK_SC',sans-serif] text-[41px] leading-[68px]">3D-Model</h1>
        </main>
    );
};

export default App;
